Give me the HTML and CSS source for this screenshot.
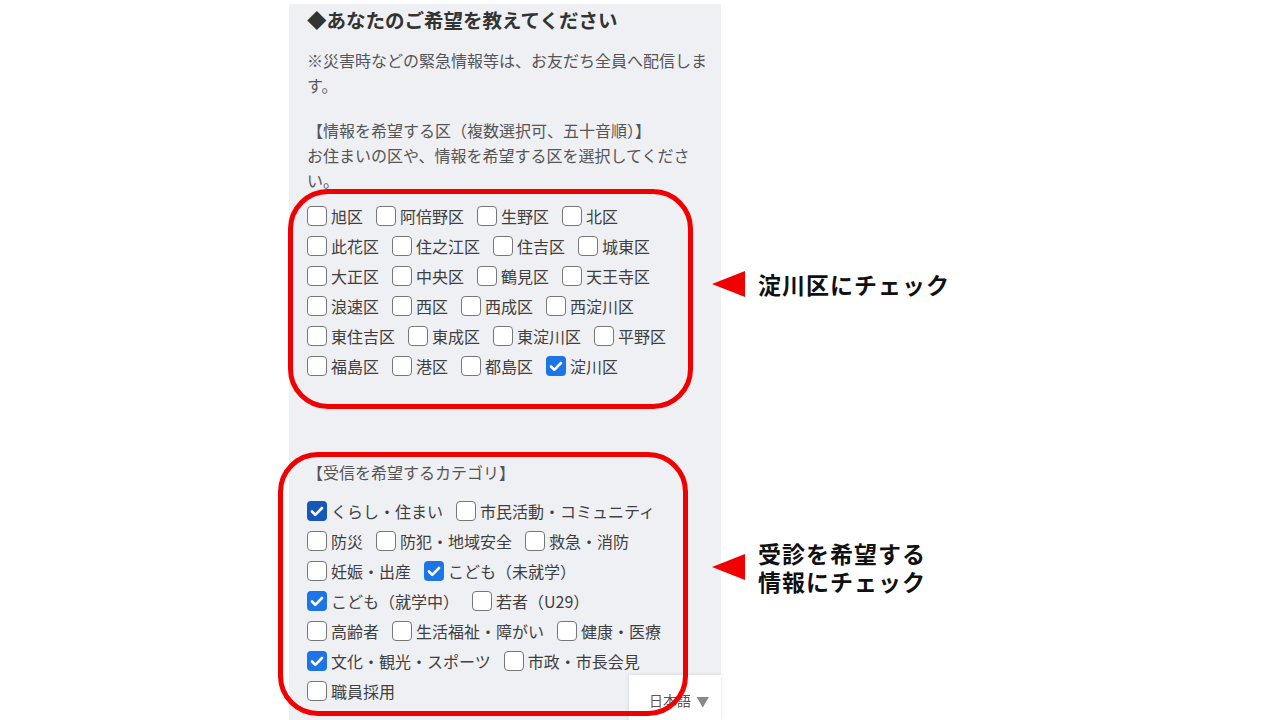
FILE: index.html
```html
<!DOCTYPE html>
<html lang="ja">
<head>
    <meta charset="UTF-8">
    <meta name="viewport" content="width=device-width, initial-scale=1.0">
    <title>配信設定</title>
    <link rel="stylesheet" href="styles.css">
</head>
<body>

<div class="page">
    <div class="panel">
        <h2 class="title">◆あなたのご希望を教えてください</h2>
        <p class="note">※災害時などの緊急情報等は、お友だち全員へ配信します。</p>
        <p class="lead">【情報を希望する区（複数選択可、五十音順）】<br>お住まいの区や、情報を希望する区を選択してください。</p>

        <div class="callout wards">
            <div class="opts">
                <label class="opt"><span class="box"></span>旭区</label>
                <label class="opt"><span class="box"></span>阿倍野区</label>
                <label class="opt"><span class="box"></span>生野区</label>
                <label class="opt"><span class="box"></span>北区</label>
                <label class="opt"><span class="box"></span>此花区</label>
                <label class="opt"><span class="box"></span>住之江区</label>
                <label class="opt"><span class="box"></span>住吉区</label>
                <label class="opt"><span class="box"></span>城東区</label>
                <label class="opt"><span class="box"></span>大正区</label>
                <label class="opt"><span class="box"></span>中央区</label>
                <label class="opt"><span class="box"></span>鶴見区</label>
                <label class="opt"><span class="box"></span>天王寺区</label>
                <label class="opt"><span class="box"></span>浪速区</label>
                <label class="opt"><span class="box"></span>西区</label>
                <label class="opt"><span class="box"></span>西成区</label>
                <label class="opt"><span class="box"></span>西淀川区</label>
                <label class="opt"><span class="box"></span>東住吉区</label>
                <label class="opt"><span class="box"></span>東成区</label>
                <label class="opt"><span class="box"></span>東淀川区</label>
                <label class="opt"><span class="box"></span>平野区</label>
                <label class="opt"><span class="box"></span>福島区</label>
                <label class="opt"><span class="box"></span>港区</label>
                <label class="opt"><span class="box"></span>都島区</label>
                <label class="opt"><span class="box checked"><svg viewBox="0 0 20 20"><path d="M5 10.5l3.3 3.3L15 7"/></svg></span>淀川区</label>
            </div>
            <div class="memo memo-wards">
                <svg class="arrow" viewBox="0 0 34 28"><polygon points="0,14 33,1 33,27"/></svg>
                <div class="memo-text">淀川区にチェック</div>
            </div>
        </div>

        <div class="callout cats">
            <p class="sub">【受信を希望するカテゴリ】</p>
            <div class="opts">
                <label class="opt"><span class="box checked focus"><svg viewBox="0 0 20 20"><path d="M5 10.5l3.3 3.3L15 7"/></svg></span>くらし・住まい</label>
                <label class="opt"><span class="box"></span>市民活動・コミュニティ</label>
                <label class="opt"><span class="box"></span>防災</label>
                <label class="opt"><span class="box"></span>防犯・地域安全</label>
                <label class="opt"><span class="box"></span>救急・消防</label>
                <label class="opt"><span class="box"></span>妊娠・出産</label>
                <label class="opt"><span class="box checked"><svg viewBox="0 0 20 20"><path d="M5 10.5l3.3 3.3L15 7"/></svg></span>こども（未就学）</label>
                <label class="opt"><span class="box checked"><svg viewBox="0 0 20 20"><path d="M5 10.5l3.3 3.3L15 7"/></svg></span>こども（就学中）</label>
                <label class="opt"><span class="box"></span>若者（U29）</label>
                <label class="opt"><span class="box"></span>高齢者</label>
                <label class="opt"><span class="box"></span>生活福祉・障がい</label>
                <label class="opt"><span class="box"></span>健康・医療</label>
                <label class="opt"><span class="box checked"><svg viewBox="0 0 20 20"><path d="M5 10.5l3.3 3.3L15 7"/></svg></span>文化・観光・スポーツ</label>
                <label class="opt"><span class="box"></span>市政・市長会見</label>
                <label class="opt"><span class="box"></span>職員採用</label>
            </div>
            <div class="memo memo-cats">
                <svg class="arrow" viewBox="0 0 34 28"><polygon points="0,14 33,1 33,27"/></svg>
                <div class="memo-text">
                    <div>受診を希望する</div>
                    <div>情報にチェック</div>
                </div>
            </div>
        </div>
    </div>
</div>

<div class="lang">日本語 <span class="caret">▼</span></div>

</body>
</html>
```

FILE: styles.css
```css
body { margin: 0; background: #fff; font-family: "Noto Sans CJK JP", "Noto Sans", sans-serif; color: #444; overflow: hidden; }
.page { padding: 4px 0 0 289px; }
.panel { width: 405px; min-height: 716px; padding: 0 9px 0 18px; background: #eff0f4; }
.title { margin: 0; font-size: 19.5px; line-height: 32px; font-weight: 700; color: #333; }
.note { margin: 12px 0 0; font-size: 16px; line-height: 25px; color: #555; }
.lead { margin: 20px 0 0; font-size: 16px; line-height: 25px; color: #555; }
.sub { margin: 0; font-size: 16px; line-height: 25px; color: #555; }

/* checkbox lists */
.opts { display: flex; flex-wrap: wrap; width: 363px; column-gap: 13px; row-gap: 10px; }
.opt { display: inline-flex; align-items: center; gap: 4px; font-size: 16px; line-height: 20px; color: #3f3f3f; white-space: nowrap; }
.box { width: 20px; height: 20px; box-sizing: border-box; border: 1.5px solid #777; border-radius: 4px; background: #fff; display: inline-flex; }
.box.checked { border: none; background: #1c74e6; }
.box.checked.focus { background: #1557b8; }
.box svg { width: 20px; height: 20px; }
.box svg path { fill: none; stroke: #fff; stroke-width: 2.6; stroke-linecap: round; stroke-linejoin: round; }

/* red annotation frames */
.callout { position: relative; }
.callout::after { content: ""; position: absolute; border: 5px solid #f00000; border-radius: 40px; pointer-events: none; z-index: 2; }
.wards { margin-top: 13px; }
.wards::after { top: -17px; left: -19px; right: 19px; bottom: -33px; }
.cats { margin-top: 84px; }
.cats .opts { margin-top: 16px; }
.cats::after { top: -8px; left: -29px; right: 24px; bottom: -15px; }

.memo { position: absolute; left: 405px; display: flex; align-items: center; gap: 12px; }
.memo-text { font-size: 23px; line-height: 28px; font-weight: 700; color: #111; letter-spacing: 1px; white-space: nowrap; }
.memo-wards { top: 64px; }
.memo-cats { top: 79px; }
.arrow { width: 34px; height: 28px; flex: none; }
.arrow polygon { fill: #f00000; }

/* language switcher */
.lang { position: fixed; left: 629px; bottom: 0; width: 92px; height: 45px; box-sizing: border-box; padding: 16px 0 0 20px; background: #fff; box-shadow: 0 0 4px rgba(0, 0, 0, 0.12); font-size: 14px; line-height: 18px; color: #555; z-index: 1; }
.caret { font-size: 13px; color: #888; margin-left: 2px; }
```
